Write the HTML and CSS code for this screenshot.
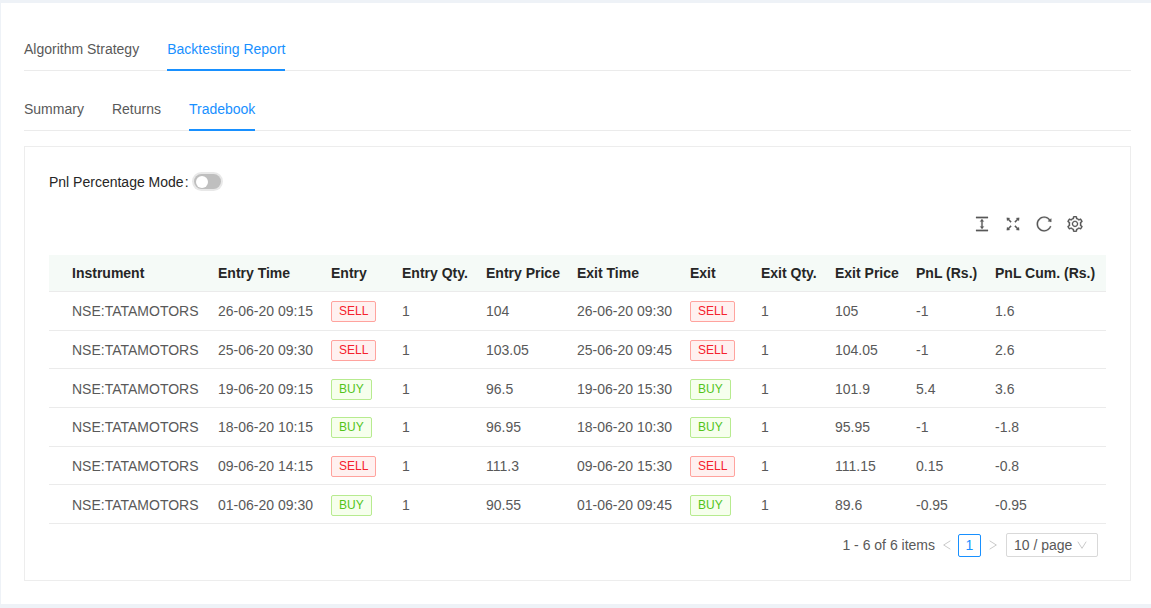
FILE: index.html
```html
<!DOCTYPE html>
<html lang="en">
<head>
<meta charset="utf-8">
<meta name="viewport" content="width=device-width, initial-scale=1">
<title>Backtesting Report - Tradebook</title>
<link rel="stylesheet" href="styles.css">
</head>
<body>
<main class="panel">
  <div class="tabs" role="tablist">
    <button class="tab" role="tab" aria-selected="false">Algorithm Strategy</button>
    <button class="tab active" role="tab" aria-selected="true">Backtesting Report</button>
  </div>
  <div class="tabs" role="tablist">
    <button class="tab" role="tab" aria-selected="false">Summary</button>
    <button class="tab" role="tab" aria-selected="false">Returns</button>
    <button class="tab active" role="tab" aria-selected="true">Tradebook</button>
  </div>
  <section class="card">
    <div class="mode">
      <label for="pnl-mode">Pnl Percentage Mode<span class="colon">:</span></label>
      <input class="switch" id="pnl-mode" type="checkbox" role="switch">
    </div>
    <div class="toolbar">
      <button class="tool" aria-label="Density"><svg viewBox="64 64 896 896"><path d="M840 836H184c-4.400 0-8 3.600-8 8v60c0 4.400 3.600 8 8 8h656c4.400 0 8-3.600 8-8v-60c0-4.400-3.600-8-8-8zm0-724H184c-4.400 0-8 3.600-8 8v60c0 4.400 3.600 8 8 8h656c4.400 0 8-3.600 8-8v-60c0-4.400-3.600-8-8-8zM610.800 378c6 0 9.400-7 5.700-11.700L515.700 238.700a7.140 7.140 0 0 0-11.300 0L403.600 366.300a7.230 7.230 0 0 0 5.700 11.700H476v268h-62.800c-6 0-9.400 7-5.700 11.700l100.800 127.500c2.900 3.700 8.500 3.700 11.300 0l100.800-127.500c3.700-4.700.4-11.700-5.700-11.700H548V378h62.800z"/></svg></button>
      <button class="tool" aria-label="Full screen"><svg viewBox="64 64 896 896"><path d="M290 236.400l43.900-43.900a8.010 8.010 0 0 0-4.700-13.600L169 160c-5.100-.6-9.500 3.700-8.900 8.900L179 329.100c.8 6.600 8.900 9.400 13.600 4.700l43.700-43.700L370 423.700c3.100 3.100 8.200 3.100 11.300 0l42.400-42.300c3.100-3.100 3.100-8.200 0-11.300L290 236.400zm352.700 187.300c3.100 3.100 8.200 3.100 11.300 0l133.700-133.600 43.700 43.700a8.010 8.010 0 0 0 13.600-4.700L863.900 169c.6-5.100-3.700-9.500-8.900-8.900L694.800 179c-6.600.8-9.400 8.900-4.700 13.600l43.900 43.900L600.300 370a8.030 8.030 0 0 0 0 11.300l42.400 42.400zM845 694.900c-.8-6.600-8.900-9.400-13.600-4.700l-43.700 43.700L654 600.300a8.030 8.030 0 0 0-11.300 0l-42.400 42.300a8.030 8.030 0 0 0 0 11.300L734 787.600l-43.900 43.900a8.010 8.010 0 0 0 4.700 13.600L855 864c5.100.6 9.500-3.700 8.900-8.900L845 694.900zm-463.700-94.600a8.030 8.030 0 0 0-11.300 0L236.300 733.900l-43.700-43.700a8.010 8.010 0 0 0-13.600 4.700L160.100 855c-.6 5.100 3.700 9.500 8.900 8.900L329.200 845c6.600-.8 9.400-8.900 4.700-13.600L290 787.600 423.700 654c3.100-3.100 3.100-8.200 0-11.300l-42.400-42.400z"/></svg></button>
      <button class="tool" aria-label="Reload"><svg viewBox="64 64 896 896"><path d="M909.100 209.300l-56.400 44.100C775.800 155.100 656.200 92 521.900 92 290 92 102.300 279.500 102 511.500 101.700 743.700 289.800 932 521.900 932c181.300 0 335.800-115 394.600-276.100 1.500-4.200-.7-8.900-4.900-10.300l-56.700-19.500a8 8 0 0 0-10.100 4.800c-1.800 5-3.800 10-5.900 14.900-17.300 41-42.100 77.800-73.700 109.400A344.770 344.770 0 0 1 655.900 829c-42.300 17.900-87.400 27-133.800 27-46.500 0-91.500-9.100-133.800-27A341.500 341.500 0 0 1 279 755.200a342.160 342.160 0 0 1-73.700-109.400c-17.900-42.400-27-87.400-27-133.900s9.100-91.500 27-133.900c17.300-41 42.100-77.800 73.700-109.400 31.600-31.600 68.400-56.400 109.300-73.800 42.300-17.900 87.400-27 133.800-27 46.500 0 91.500 9.100 133.800 27a341.500 341.500 0 0 1 109.300 73.800c9.900 9.900 19.200 20.400 27.800 31.400l-60.200 47a8 8 0 0 0 3 14.100l175.600 43c5 1.200 9.900-2.600 9.900-7.700l.8-180.900c-.1-6.600-7.800-10.300-13-6.200z"/></svg></button>
      <button class="tool" aria-label="Column settings"><svg viewBox="64 64 896 896"><path d="M924.800 625.700l-65.500-56c3.100-19 4.700-38.400 4.700-57.800s-1.600-38.800-4.700-57.800l65.500-56a32.030 32.030 0 0 0 9.300-35.200l-.9-2.600a443.740 443.740 0 0 0-79.700-137.900l-1.800-2.100a32.120 32.120 0 0 0-35.100-9.500l-81.300 28.900c-30-24.600-63.500-44-99.700-57.600l-15.700-85a32.050 32.050 0 0 0-25.800-25.700l-2.700-.5c-52.100-9.400-106.900-9.400-159 0l-2.700.5a32.050 32.050 0 0 0-25.800 25.700l-15.800 85.400a351.860 351.860 0 0 0-99 57.400l-81.900-29.100a32 32 0 0 0-35.100 9.500l-1.800 2.100a446.020 446.020 0 0 0-79.700 137.900l-.9 2.600c-4.500 12.500-.8 26.500 9.300 35.200l66.300 56.600c-3.100 18.800-4.600 38-4.600 57.100 0 19.200 1.500 38.400 4.600 57.100L99 625.500a32.030 32.030 0 0 0-9.300 35.200l.9 2.600c18.100 50.400 44.900 96.900 79.700 137.900l1.800 2.100a32.120 32.120 0 0 0 35.100 9.500l81.900-29.100c29.800 24.500 63.100 43.900 99 57.400l15.800 85.400a32.050 32.050 0 0 0 25.800 25.700l2.700.5a449.400 449.400 0 0 0 159 0l2.700-.5a32.050 32.050 0 0 0 25.800-25.700l15.700-85a350 350 0 0 0 99.700-57.600l81.300 28.900a32 32 0 0 0 35.100-9.500l1.800-2.100c34.800-41.100 61.600-87.500 79.700-137.900l.9-2.600c4.500-12.300.8-26.300-9.300-35zM788.300 465.900c2.500 15.100 3.800 30.600 3.800 46.100s-1.300 31-3.800 46.100l-6.600 40.100 74.700 63.900a370.030 370.030 0 0 1-42.600 73.600L721 702.800l-31.400 25.800c-23.900 19.600-50.500 35-79.300 45.800l-38.100 14.300-17.900 97a377.500 377.500 0 0 1-85 0l-17.900-97.200-37.800-14.500c-28.500-10.800-55-26.200-78.700-45.700l-31.400-25.900-93.400 33.200c-17-22.900-31.200-47.600-42.600-73.600l75.500-64.500-6.500-40c-2.400-14.900-3.700-30.300-3.700-45.500 0-15.300 1.200-30.600 3.700-45.500l6.500-40-75.500-64.500c11.300-26.100 25.600-50.700 42.600-73.600l93.400 33.200 31.400-25.900c23.700-19.500 50.200-34.900 78.700-45.700l37.900-14.300 17.900-97.200c28.100-3.200 56.800-3.200 85 0l17.900 97 38.100 14.300c28.700 10.800 55.400 26.200 79.300 45.800l31.400 25.800 92.800-32.900c17 22.900 31.200 47.600 42.600 73.600L781.800 426l6.500 39.900zM512 326c-97.200 0-176 78.800-176 176s78.800 176 176 176 176-78.800 176-176-78.800-176-176-176zm79.200 255.200A111.600 111.600 0 0 1 512 614c-29.900 0-58-11.700-79.200-32.800A111.600 111.600 0 0 1 400 502c0-29.900 11.700-58 32.800-79.200C454 401.600 482.100 390 512 390c29.900 0 58 11.600 79.200 32.800A111.600 111.600 0 0 1 624 502c0 29.900-11.700 58-32.800 79.200z"/></svg></button>
    </div>
    <table class="trades">
      <colgroup><col class="c-instrument"><col class="c-time"><col class="c-side"><col class="c-qty"><col class="c-price"><col class="c-time"><col class="c-side"><col class="c-exit-qty"><col class="c-exit-price"><col class="c-pnl"><col class="c-cum"></colgroup>
      <thead><tr><th>Instrument</th><th>Entry Time</th><th>Entry</th><th>Entry Qty.</th><th>Entry Price</th><th>Exit Time</th><th>Exit</th><th>Exit Qty.</th><th>Exit Price</th><th>PnL (Rs.)</th><th>PnL Cum. (Rs.)</th></tr></thead>
      <tbody>
        <tr><td>NSE:TATAMOTORS</td><td>26-06-20 09:15</td><td><span class="tag sell">SELL</span></td><td>1</td><td>104</td><td>26-06-20 09:30</td><td><span class="tag sell">SELL</span></td><td>1</td><td>105</td><td>-1</td><td>1.6</td></tr>
        <tr><td>NSE:TATAMOTORS</td><td>25-06-20 09:30</td><td><span class="tag sell">SELL</span></td><td>1</td><td>103.05</td><td>25-06-20 09:45</td><td><span class="tag sell">SELL</span></td><td>1</td><td>104.05</td><td>-1</td><td>2.6</td></tr>
        <tr><td>NSE:TATAMOTORS</td><td>19-06-20 09:15</td><td><span class="tag buy">BUY</span></td><td>1</td><td>96.5</td><td>19-06-20 15:30</td><td><span class="tag buy">BUY</span></td><td>1</td><td>101.9</td><td>5.4</td><td>3.6</td></tr>
        <tr><td>NSE:TATAMOTORS</td><td>18-06-20 10:15</td><td><span class="tag buy">BUY</span></td><td>1</td><td>96.95</td><td>18-06-20 10:30</td><td><span class="tag buy">BUY</span></td><td>1</td><td>95.95</td><td>-1</td><td>-1.8</td></tr>
        <tr><td>NSE:TATAMOTORS</td><td>09-06-20 14:15</td><td><span class="tag sell">SELL</span></td><td>1</td><td>111.3</td><td>09-06-20 15:30</td><td><span class="tag sell">SELL</span></td><td>1</td><td>111.15</td><td>0.15</td><td>-0.8</td></tr>
        <tr><td>NSE:TATAMOTORS</td><td>01-06-20 09:30</td><td><span class="tag buy">BUY</span></td><td>1</td><td>90.55</td><td>01-06-20 09:45</td><td><span class="tag buy">BUY</span></td><td>1</td><td>89.6</td><td>-0.95</td><td>-0.95</td></tr>
      </tbody>
    </table>
    <nav class="pager" aria-label="Pagination">
      <span>1 - 6 of 6 items</span>
      <button class="arrow" aria-label="Previous page" disabled><svg viewBox="0 0 12 12"><path d="M10 1 2 6l8 5"/></svg></button>
      <button class="page" aria-current="page">1</button>
      <button class="arrow" aria-label="Next page" disabled><svg viewBox="0 0 12 12"><path d="m2 1 8 5-8 5"/></svg></button>
      <span class="size">
        <select aria-label="Items per page"><option>10 / page</option><option>20 / page</option></select>
        <svg viewBox="0 0 12 12" aria-hidden="true"><path d="m1 2 5 8 5-8"/></svg>
      </span>
    </nav>
  </section>
</main>
</body>
</html>
```
FILE: styles.css
```css
* { box-sizing: border-box; }
body {
  margin: 0;
  padding: 3px 0 4px 1px;
  background: #eef2f7;
  color: #595959;
  font: 14px/20px "Liberation Sans", Arial, sans-serif;
}
button, select { font: inherit; color: inherit; margin: 0; padding: 0; border: 0; background: none; }
.panel { background: #fff; padding: 24px 20px 23px 23px; }
.tabs { display: flex; gap: 28px; height: 44px; margin-bottom: 16px; border-bottom: 1px solid #ebebeb; }
.tabs:nth-child(2) { margin-bottom: 15px; }
.tab { height: 44px; padding-top: 1px; border-bottom: 2px solid transparent; }
.tab.active { color: #1890ff; border-bottom-color: #1890ff; }
.card { border: 1px solid #ededed; padding: 24px 24px 23px; }
.mode { display: flex; align-items: center; gap: 5px; height: 21px; color: #262626; }
.colon { margin-left: 1px; }
.switch {
  appearance: none;
  display: flex;
  align-items: center;
  width: 27px;
  height: 15px;
  margin: 0;
  padding: 0 2px;
  border-radius: 8px;
  background: #bfbfbf;
  box-shadow: 0 0 0 2px #e8e8e8;
}
.switch::before { content: ""; width: 12px; height: 12px; border-radius: 50%; background: #fff; }
.switch:checked { justify-content: flex-end; background: #1890ff; }
.toolbar { display: flex; justify-content: flex-end; align-items: center; gap: 15px; height: 63px; padding-right: 23px; }
.tool { width: 16px; height: 16px; }
.tool svg { display: block; width: 16px; height: 16px; fill: #595959; stroke: #595959; stroke-width: 12; }
.trades { width: 100%; height: 269px; table-layout: fixed; border-collapse: separate; border-spacing: 0; }
.trades th, .trades td { height: 38px; padding: 1px 0 0; border-bottom: 1px solid #ebebeb; text-align: left; white-space: nowrap; }
.trades th { height: 37px; padding-top: 0; background: #f5faf7; color: #262626; font-weight: 700; }
.trades th:first-child, .trades td:first-child { padding-left: 23px; }
.c-instrument { width: 169px; }
.c-time { width: 113px; }
.c-side { width: 71px; }
.c-qty { width: 84px; }
.c-price { width: 91px; }
.c-exit-qty { width: 74px; }
.c-exit-price { width: 81px; }
.c-pnl { width: 79px; }
.c-cum { width: 111px; }
.tag { display: inline-block; vertical-align: middle; padding: 0 7px; border: 1px solid; border-radius: 2px; font-size: 12px; line-height: 19px; }
.sell { color: #f5222d; background: #fff1f0; border-color: #ffa39e; }
.buy { color: #52c41a; background: #f6ffed; border-color: #b7eb8f; }
.pager { display: flex; justify-content: flex-end; align-items: center; height: 24px; margin-top: 9px; padding-right: 8px; }
.pager svg { display: block; width: 10px; height: 10px; fill: none; stroke: #bfbfbf; stroke-width: 1; }
.arrow { display: grid; place-items: center; width: 23px; height: 24px; }
.page { width: 23px; height: 23px; border: 1px solid #1890ff; border-radius: 2px; color: #1890ff; }
.size { display: grid; align-items: center; width: 92px; height: 24px; margin-left: 2px; }
.size select { grid-area: 1 / 1; width: 92px; height: 24px; padding: 0 7px; appearance: none; border: 1px solid #d9d9d9; border-radius: 2px; background: #fff; }
.size svg { grid-area: 1 / 1; justify-self: end; margin-right: 11px; pointer-events: none; }
```
